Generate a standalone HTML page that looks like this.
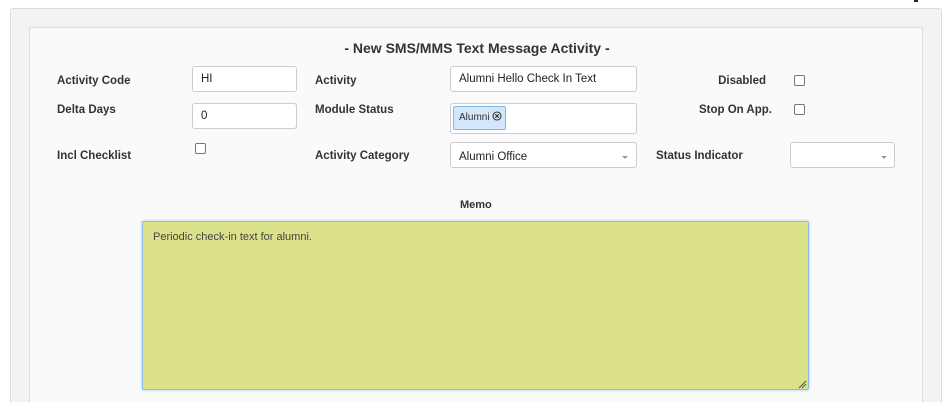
<!DOCTYPE html>
<html style="height:402px;overflow:hidden"><head><style>
body{margin:0;width:950px;height:402px;background:#fff;font-family:"Liberation Sans",Arial,sans-serif;font-size:12px;color:#333;position:relative;overflow:hidden}
.a{position:absolute}
.outer{left:10px;top:8px;width:930px;height:393px;border:1px solid #ddd;border-bottom:none;background:#f3f3f3;border-radius:3px 3px 0 0}
.inner{left:29px;top:27px;width:892px;height:375px;border:1px solid #ddd;border-bottom:none;background:#fafafa}
.lbl{font-weight:bold;color:#333;font-size:11.5px}
.in{border:1px solid #ccc;background:#fff;border-radius:3px;box-sizing:border-box;font-size:11.5px;padding-left:8px;color:#222}
.cb{width:9px;height:9px;border:1px solid #777;border-radius:2px;background:#fff}
.caret{width:0;height:0;border-left:3px solid transparent;border-right:3px solid transparent;border-top:3px solid #999}
</style></head><body>
<div class="a" style="left:914px;top:0;width:4px;height:2px;background:#1a2a5a"></div>
<div class="a outer"></div>
<div class="a inner"></div>
<div class="a" style="left:0;width:950px;top:40px;text-align:center;font-weight:bold;font-size:14px;color:#333;padding-left:2px">- New SMS/MMS Text Message Activity -</div>

<div class="a lbl" style="left:57px;top:75px">Activity Code</div>
<div class="a in" style="left:192px;top:66px;width:105px;height:26px;line-height:24px">HI</div>
<div class="a lbl" style="left:315px;top:75px">Activity</div>
<div class="a in" style="left:450px;top:66px;width:187px;height:26px;line-height:24px">Alumni Hello Check In Text</div>
<div class="a lbl" style="right:184px;top:75px">Disabled</div>
<div class="a cb" style="left:794px;top:75px"></div>

<div class="a lbl" style="left:57px;top:104px">Delta Days</div>
<div class="a in" style="left:192px;top:103px;width:105px;height:26px;line-height:24px">0</div>
<div class="a lbl" style="left:315px;top:104px">Module Status</div>
<div class="a in" style="left:450px;top:103px;width:187px;height:31px"></div>
<div class="a" style="left:453px;top:106px;width:53px;height:24px;box-sizing:border-box;border:1px solid #8ab4e0;background:#d4e6fb;border-radius:2px;font-size:10px;line-height:21px;padding-left:5px;color:#333;white-space:nowrap">Alumni <svg width="10" height="10" style="vertical-align:-1px"><circle cx="5" cy="5" r="4" fill="none" stroke="#333" stroke-width="1.1"/><path d="M3.3 3.3L6.7 6.7M6.7 3.3L3.3 6.7" stroke="#333" stroke-width="1.1"/></svg></div>
<div class="a lbl" style="right:178px;top:104px">Stop On App.</div>
<div class="a cb" style="left:794px;top:104px"></div>

<div class="a lbl" style="left:57px;top:150px">Incl Checklist</div>
<div class="a cb" style="left:195px;top:143px"></div>
<div class="a lbl" style="left:315px;top:150px">Activity Category</div>
<div class="a in" style="left:450px;top:142px;width:187px;height:26px;line-height:28px">Alumni Office</div>
<div class="a caret" style="left:622px;top:156px"></div>
<div class="a lbl" style="left:656px;top:150px">Status Indicator</div>
<div class="a in" style="left:790px;top:142px;width:105px;height:26px"></div>
<div class="a caret" style="left:881px;top:156px"></div>

<div class="a lbl" style="left:460px;top:199px;font-size:11px">Memo</div>
<div class="a" style="left:142px;top:221px;width:667px;height:169px;box-sizing:border-box;border:1px solid #8fbbe6;box-shadow:0 0 3px #a8cdf0;background:#dbe28a;border-radius:2px;padding:9px 10px;font-size:11px;color:#444">Periodic check-in text for alumni.</div>
<svg class="a" style="left:798px;top:380px" width="9" height="9"><path d="M1 8L8 1M4 8L8 4" stroke="#555" stroke-width="1"/></svg>
</body></html>
